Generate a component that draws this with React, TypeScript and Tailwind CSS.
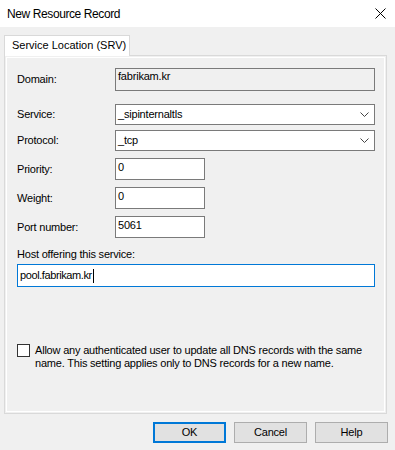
import React from "react";

function Chevron() {
  return (
    <svg width="9" height="5" viewBox="0 0 9 5" className="shrink-0">
      <polyline points="0.5,0.5 4.5,4.5 8.5,0.5" fill="none" stroke="#444" strokeWidth="1" />
    </svg>
  );
}

function Label({ children }: { children: React.ReactNode }) {
  return <div className="w-[98px] shrink-0">{children}</div>;
}

export default function App() {
  return (
    <div className="w-[395px] h-[450px] bg-[#f0f0f0] font-['Liberation_Sans',Arial,sans-serif] text-black text-[11px] leading-[13px] tracking-[-0.2px] flex flex-col overflow-hidden">
      {/* Title bar */}
      <div className="h-[27px] shrink-0 bg-white flex items-center justify-between pl-[7px] pr-[9px]">
        <span className="text-[12px] leading-[16px] tracking-[-0.4px]">New Resource Record</span>
        <svg width="11" height="11" viewBox="0 0 11 11">
          <path d="M0.5 0.5 L10.5 10.5 M10.5 0.5 L0.5 10.5" stroke="#000" strokeWidth="1" fill="none" />
        </svg>
      </div>

      <div className="pl-[4px] pt-[8px] flex flex-col">
        {/* Tab */}
        <div className="relative z-10 w-[126px] h-[21px] -mb-px bg-white border border-b-0 border-[#d9d9d9] pl-[7px] pt-[3px] tracking-normal">
          Service Location (SRV)
        </div>

        {/* Panel */}
        <div className="w-[383px] h-[359px] border border-[#d9d9d9] p-[1px]">
          <div className="h-full border border-white pl-[10px] pt-[10px] flex flex-col">
            {/* Domain */}
            <div className="flex items-center h-[23px]">
              <Label>Domain:</Label>
              <div className="w-[260px] h-[23px] border border-[#7a7a7a] bg-[#f0f0f0] pl-[2px] pt-[1px]">
                fabrikam.kr
              </div>
            </div>

            {/* Service */}
            <div className="flex items-center mt-[13px] h-[21px]">
              <Label>Service:</Label>
              <div className="w-[260px] h-[21px] border border-[#7a7a7a] bg-white pl-[2px] pr-[5px] flex items-center justify-between">
                <span>_sipinternaltls</span>
                <Chevron />
              </div>
            </div>

            {/* Protocol */}
            <div className="flex items-center mt-[5px] h-[21px]">
              <Label>Protocol:</Label>
              <div className="w-[260px] h-[21px] border border-[#7a7a7a] bg-white pl-[2px] pr-[5px] flex items-center justify-between">
                <span>_tcp</span>
                <Chevron />
              </div>
            </div>

            {/* Priority */}
            <div className="flex items-center mt-[7px] h-[22px]">
              <Label>Priority:</Label>
              <div className="w-[90px] h-[22px] border border-[#7a7a7a] bg-white pl-[2px] pt-[2px]">0</div>
            </div>

            {/* Weight */}
            <div className="flex items-center mt-[7px] h-[22px]">
              <Label>Weight:</Label>
              <div className="w-[90px] h-[22px] border border-[#7a7a7a] bg-white pl-[2px] pt-[2px]">0</div>
            </div>

            {/* Port */}
            <div className="flex items-center mt-[7px] h-[22px]">
              <Label>Port number:</Label>
              <div className="w-[90px] h-[22px] border border-[#7a7a7a] bg-white pl-[2px] pt-[2px]">5061</div>
            </div>

            {/* Host */}
            <div className="mt-[10px]">Host offering this service:</div>
            <div className="mt-[3px] w-[358px] h-[23px] border border-[#0078d7] bg-white pl-[2px] flex items-center">
              <span className="tracking-[-0.4px]">pool.fabrikam.kr</span>
              <span className="inline-block w-px h-[14px] bg-black ml-px" />
            </div>

            {/* Checkbox */}
            <div className="mt-[57px] flex items-start">
              <div className="w-[13px] h-[13px] border border-[#333] bg-white shrink-0" />
              <div className="ml-[5px]">
                Allow any authenticated user to update all DNS records with the same
                <br />
                name. This setting applies only to DNS records for a new name.
              </div>
            </div>
          </div>
        </div>
      </div>

      {/* Buttons */}
      <div className="mt-[8px] flex justify-end gap-[8px] pr-[7px]">
        <button className="w-[73px] h-[21px] border-2 border-[#0078d7] bg-[#e1e1e1] flex items-center justify-center">
          OK
        </button>
        <button className="w-[73px] h-[21px] border border-[#adadad] bg-[#e1e1e1] flex items-center justify-center">
          Cancel
        </button>
        <button className="w-[73px] h-[21px] border border-[#adadad] bg-[#e1e1e1] flex items-center justify-center">
          Help
        </button>
      </div>
    </div>
  );
}
